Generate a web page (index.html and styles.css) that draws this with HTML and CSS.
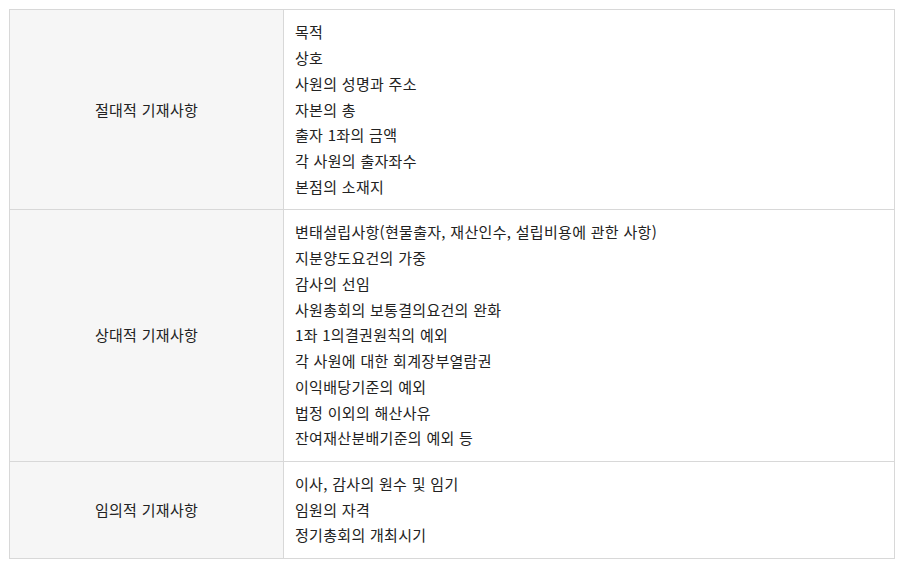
FILE: index.html
```html
<!DOCTYPE html>
<html lang="ko">
<head>
<meta charset="utf-8">
<link rel="stylesheet" href="styles.css">
</head>
<body>
<table class="info">
  <tr>
    <th>절대적 기재사항</th>
    <td>
      <div>목적</div>
      <div>상호</div>
      <div>사원의 성명과 주소</div>
      <div>자본의 총</div>
      <div>출자 1좌의 금액</div>
      <div>각 사원의 출자좌수</div>
      <div>본점의 소재지</div>
    </td>
  </tr>
  <tr>
    <th>상대적 기재사항</th>
    <td>
      <div>변태설립사항(현물출자, 재산인수, 설립비용에 관한 사항)</div>
      <div>지분양도요건의 가중</div>
      <div>감사의 선임</div>
      <div>사원총회의 보통결의요건의 완화</div>
      <div>1좌 1의결권원칙의 예외</div>
      <div>각 사원에 대한 회계장부열람권</div>
      <div>이익배당기준의 예외</div>
      <div>법정 이외의 해산사유</div>
      <div>잔여재산분배기준의 예외 등</div>
    </td>
  </tr>
  <tr>
    <th>임의적 기재사항</th>
    <td>
      <div>이사, 감사의 원수 및 임기</div>
      <div>임원의 자격</div>
      <div>정기총회의 개최시기</div>
    </td>
  </tr>
</table>
</body>
</html>
```

FILE: styles.css
```css
html, body {
  margin: 0;
  padding: 0;
  background: #fff;
}
body {
  padding: 9px 12px 0 9px;
  font-family: "Noto Sans CJK KR", "Noto Sans", sans-serif;
  font-size: 15px;
  letter-spacing: 0.3px;
  color: #222;
}
.info {
  width: 886px;
  border-collapse: collapse;
  border: 1px solid #d8d8d8;
}
.info th,
.info td {
  border: 1px solid #d8d8d8;
  line-height: 25.75px;
  padding: 9.4px 11px;
  vertical-align: middle;
}
.info th {
  width: 251px;
  background: #f6f6f6;
  font-weight: 400;
  text-align: center;
}
.info td {
  text-align: left;
}
```
